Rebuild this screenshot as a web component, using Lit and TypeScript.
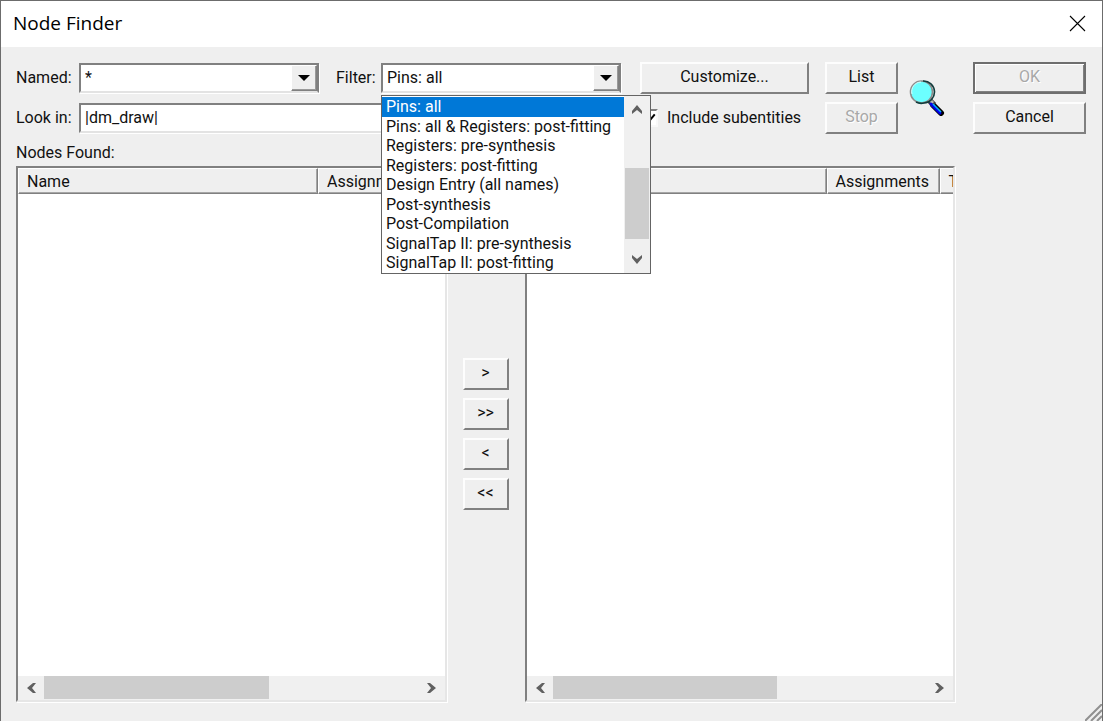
import { LitElement, html, css } from "lit";
import { customElement, property, state } from "lit/decorators.js";

const FILTERS = [
  "Pins: all",
  "Pins: all & Registers: post-fitting",
  "Registers: pre-synthesis",
  "Registers: post-fitting",
  "Design Entry (all names)",
  "Post-synthesis",
  "Post-Compilation",
  "SignalTap II: pre-synthesis",
  "SignalTap II: post-fitting",
];

const CHEVRONS: Record<string, string> = {
  left: "M8 1h3L7 6l4 5H8L2 6z",
  right: "M4 1H1l4 5-4 5h3l6-5z",
  up: "M1 8v3l5-4 5 4V8L6 2z",
  down: "M1 4V1l5 4 5-4v3l-5 6z",
};

const chevron = (dir: string) => html`<svg width="12" height="12" viewBox="0 0 12 12" aria-hidden="true">
  <path d=${CHEVRONS[dir]} fill="#606060" />
</svg>`;

const dropArrow = html`<svg width="12" height="6" viewBox="0 0 12 6" aria-hidden="true"><path d="M0 0h12L6 6z" fill="#000"/></svg>`;

@customElement("node-list")
export class NodeList extends LitElement {
  @property() label = "";

  static styles = css`
    :host { display: flex; flex: 1; min-width: 0; }
    .list {
      flex: 1; min-width: 0; display: flex; flex-direction: column; background: #fff;
      border: 2px solid; border-color: #808080 #e6e6e6 #e6e6e6 #808080;
      box-shadow: 1px 1px 0 #fff;
    }
    .view { flex: 1; overflow: hidden; }
    table { table-layout: fixed; width: 530px; border-collapse: separate; border-spacing: 0; }
    th {
      height: 26px; padding: 2px 8px 0; text-align: left; font-weight: 400; background: #efefef;
      box-sizing: border-box; border: 1px solid; border-color: #fff #808080 #808080 #fff;
      box-shadow: inset -1px -1px 0 #a6a6a6; white-space: nowrap;
    }
    .name { width: 300px; }
    .assign { width: 113px; }
    .bar { display: flex; height: 24px; background: #f0f0f0; }
    .step {
      width: 26px; padding: 0; border: 0; background: none;
      display: flex; align-items: center; justify-content: center;
    }
    .track { flex: 1; display: flex; }
    .thumb { width: 60%; background: #cdcdcd; margin-bottom: 1px; }
  `;

  render() {
    return html`<section class="list" aria-label=${this.label}>
      <div class="view">
        <table>
          <thead>
            <tr><th class="name">Name</th><th class="assign">Assignments</th><th>Type</th></tr>
          </thead>
        </table>
      </div>
      <div class="bar">
        <button class="step" aria-label="Scroll left">${chevron("left")}</button>
        <div class="track"><div class="thumb"></div></div>
        <button class="step" aria-label="Scroll right">${chevron("right")}</button>
      </div>
    </section>`;
  }
}

@customElement("app-root")
export class AppRoot extends LitElement {
  @state() private filter = FILTERS[0];

  static styles = css`
    :host { display: block; font: 16px/20px Roboto, "Liberation Sans", sans-serif; color: #111; }
    * { box-sizing: border-box; }
    button, input, select { font: inherit; color: inherit; }
    .dialog {
      min-height: 100vh; display: flex; flex-direction: column; background: #efefef;
      border: 1px solid #6c6c6c; border-bottom: 0; position: relative;
    }
    .title {
      height: 46px; background: #fff; display: flex; align-items: center;
      justify-content: space-between; padding: 0 16px 2px 12px;
    }
    h1 { margin: 0; font: 400 19px/24px "Open Sans", "Noto Sans", sans-serif; color: #000; }
    .close { border: 0; padding: 0; background: none; display: flex; }
    .body { flex: 1; display: flex; gap: 18px; padding: 15px 16px 19px 15px; }
    .main { flex: 1; min-width: 0; display: flex; flex-direction: column; }
    .form {
      display: grid; align-items: center; row-gap: 8px;
      grid-template-columns: 63px minmax(0, 1fr) 62px minmax(0, 1fr) 19px 169px 16px 73px 11px 36px 10px;
      grid-template-rows: 32px 32px;
    }
    .filter-label { padding-left: 17px; }
    .field {
      position: relative; display: flex; height: 30px; background: #fff;
      border: 2px solid; border-color: #808080 #e3e3e3 #e3e3e3 #808080;
      box-shadow: 1px 1px 0 #fff;
    }
    .combo { border-right-color: #808080; }
    .look-label { grid-column: 1; grid-row: 2; }
    .look { grid-column: 2 / 5; grid-row: 2; }
    .text {
      flex: 1; min-width: 0; border: 0; padding: 0 4px; background: none;
      outline: 0; appearance: none; border-radius: 0;
    }
    .drop {
      width: 26px; padding: 0; background: #efefef; display: flex; align-items: center;
      justify-content: center; border: 1px solid; border-color: #fff #808080 #808080 #fff;
      box-shadow: inset -1px -1px 0 #9a9a9a;
    }
    .btn {
      height: 32px; padding: 0 0 2px; background: #efefef; border-radius: 0;
      border: 2px solid; border-color: #fdfdfd #808080 #808080 #fdfdfd;
      display: flex; align-items: center; justify-content: center;
    }
    .btn:disabled { color: #a8a8a8; text-shadow: 1px 1px 0 #fff; }
    .customize { grid-column: 6; }
    .list { grid-column: 8; grid-row: 1; }
    .stop { grid-column: 8; grid-row: 2; }
    .glass { grid-column: 10; grid-row: 1 / 3; }
    .check {
      grid-column: 6; grid-row: 2; display: flex; align-items: center; gap: 9px; white-space: nowrap;
    }
    .box {
      appearance: none; width: 18px; height: 18px; margin: 0; background: #fff;
      border: 2px solid; border-color: #808080 #f8f8f8 #f8f8f8 #808080; position: relative;
    }
    .box::after {
      content: ""; position: absolute; left: 5px; top: 1px; width: 4px; height: 8px;
      border: solid #000; border-width: 0 2px 2px 0; transform: rotate(40deg);
    }
    .popup {
      position: absolute; z-index: 2; left: -2px; top: 30px; width: 270px; height: 179px;
      display: flex; background: #fff; border: 1px solid #646464;
    }
    .options {
      flex: 1; margin: 0; padding: 1px 0 0; list-style: none; display: grid;
      grid-template-rows: repeat(9, minmax(0, 1fr)); overflow: hidden;
    }
    .option { padding: 0 4px; white-space: nowrap; line-height: 20px; }
    .option[aria-selected="true"] { background: #0078d7; color: #fff; }
    .vbar { width: 26px; padding: 1px; display: flex; flex-direction: column; background: #f0f0f0; }
    .vstep {
      height: 24px; border: 0; padding: 0; background: none;
      display: flex; align-items: center; justify-content: center;
    }
    .vtrack {
      flex: 1; display: flex; flex-direction: column; justify-content: flex-end; padding-bottom: 9px;
    }
    .vthumb { height: 60%; background: #cdcdcd; }
    .found { padding: 9px 0 3px; }
    .lists { flex: 1; display: flex; }
    .moves {
      width: 78px; display: flex; flex-direction: column; align-items: center;
      justify-content: center; gap: 8px;
    }
    .move { width: 46px; }
    .side { width: 113px; display: flex; flex-direction: column; gap: 8px; }
    .default {
      border-color: #6e6e6e; box-shadow: inset 1px 1px 0 #fff, inset -1px -1px 0 #808080;
    }
    .grip { position: absolute; right: 0; bottom: 0; }
  `;

  render() {
    return html`<main class="dialog">
      <header class="title">
        <h1>Node Finder</h1>
        <button class="close" aria-label="Close">
          <svg width="17" height="17" viewBox="0 0 17 17"><path d="M1 1l15 15M16 1L1 16" stroke="#000" stroke-width="1.1" /></svg>
        </button>
      </header>
      <div class="body">
        <div class="main">
          <div class="form">
            <label for="named">Named:</label>
            <div class="field combo">
              <input class="text" id="named" value="*" />
              <button class="drop" aria-label="Show names">${dropArrow}</button>
            </div>
            <label class="filter-label" for="filter">Filter:</label>
            <div class="field combo">
              <select class="text" id="filter" .value=${this.filter}
                @change=${(e: Event) => (this.filter = (e.target as HTMLSelectElement).value)}>
                ${FILTERS.map((f) => html`<option>${f}</option>`)}
              </select>
              <button class="drop" aria-label="Show filters">${dropArrow}</button>
              <div class="popup">
                <ul class="options" role="listbox" aria-label="Filter">
                  ${FILTERS.map((f) => html`<li class="option" role="option" aria-selected=${f === this.filter}
                    @click=${() => (this.filter = f)}>${f}</li>`)}
                </ul>
                <div class="vbar">
                  <button class="vstep" aria-label="Scroll up">${chevron("up")}</button>
                  <div class="vtrack"><div class="vthumb"></div></div>
                  <button class="vstep" aria-label="Scroll down">${chevron("down")}</button>
                </div>
              </div>
            </div>
            <button class="btn customize">Customize...</button>
            <button class="btn list">List</button>
            <svg class="glass" width="36" height="36" viewBox="0 0 36 36" fill="none" aria-hidden="true">
              <path d="M24 25l8 8" stroke="#000" stroke-width="6" stroke-linecap="round" />
              <path d="M20 20l5 5" stroke="#404040" stroke-width="6" />
              <path d="M19 18l5 5" stroke="#b8b8b8" stroke-width="3" />
              <path d="M22 24l9 9" stroke="#0000e8" stroke-width="3" stroke-linecap="round" />
              <path d="M24 24l8 8" stroke="#00b0ff" stroke-width="1.6" />
              <circle cx="12.5" cy="12" r="11" fill="#6cffff" stroke="#8c8c8c" stroke-width="1.6" />
              <path d="M14 1a11 11 0 0 1 1 22 11 11 0 0 1-8-1" stroke="#123c3c" stroke-width="1.6" />
              <path d="M3 14a9.500 9.500 0 0 1 9-12" stroke="#d8ffff" stroke-width="1" />
            </svg>
            <label class="look-label" for="look">Look in:</label>
            <div class="field look"><input class="text" id="look" value="|dm_draw|" /></div>
            <label class="check"><input class="box" type="checkbox" checked />Include subentities</label>
            <button class="btn stop" disabled>Stop</button>
          </div>
          <div class="found">Nodes Found:</div>
          <div class="lists">
            <node-list label="Nodes Found"></node-list>
            <div class="moves">
              ${[">", ">>", "<", "<<"].map((t) => html`<button class="btn move">${t}</button>`)}
            </div>
            <node-list label="Selected Nodes"></node-list>
          </div>
        </div>
        <div class="side">
          <button class="btn default" disabled>OK</button>
          <button class="btn">Cancel</button>
        </div>
      </div>
      <svg class="grip" width="17" height="17" viewBox="0 0 17 17" aria-hidden="true">
        <path d="M0 17L17 0M6 17L17 6M12 17l5-5" stroke="#909090" stroke-width="2" />
      </svg>
    </main>`;
  }
}
